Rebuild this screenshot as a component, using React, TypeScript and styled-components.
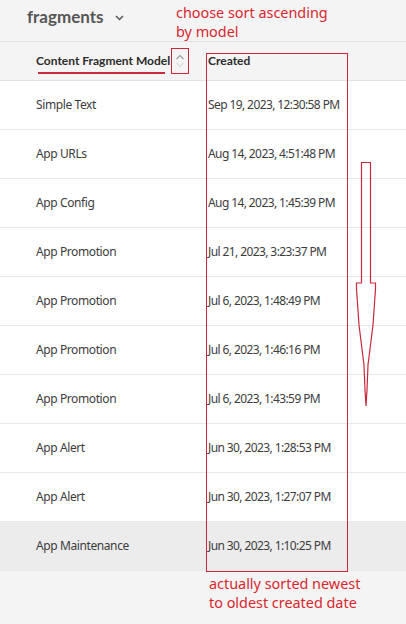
import React from "react";
import styled, { createGlobalStyle } from "styled-components";

const Global = createGlobalStyle`
  html, body { margin: 0; padding: 0; background: #f4f4f4; }
  body { font-family: "Noto Sans", Lato, sans-serif; }
  * { box-sizing: border-box; }
`;

const Page = styled.div`
  position: relative;
  width: 406px;
  height: 624px;
  background: #f4f4f4;
  overflow: hidden;
`;

const TopBar = styled.div`
  height: 42px;
  display: flex;
  align-items: center;
  padding-left: 27px;
  gap: 11px;
  border-bottom: 1px solid #e3e3e3;
`;

const Title = styled.span`
  font-family: Lato, sans-serif;
  font-size: 17px;
  font-weight: 700;
  color: #565656;
  margin-top: -8px;
`;

const Chevron = styled.svg`
  width: 9px;
  height: 6px;
  margin-top: -6px;
`;

const HeaderRow = styled.div`
  height: 39px;
  display: grid;
  grid-template-columns: 172px 1fr;
  align-items: center;
  padding-left: 36px;
  border-bottom: 1px solid #e3e3e3;
`;

const HeadCell = styled.div`
  display: flex;
  align-items: center;
  font-family: Lato, sans-serif;
  font-size: 12px;
  font-weight: 700;
  color: #2c2c2c;
  margin-top: -1px;
  white-space: nowrap;
`;

const SortBox = styled.div`
  width: 18px;
  height: 26px;
  margin-left: 1px;
  display: flex;
  align-items: center;
  justify-content: center;
  border: 1px solid #c8283a;
`;

const Row = styled.div<{ $selected?: boolean }>`
  height: 49px;
  display: grid;
  grid-template-columns: 172px 1fr;
  align-items: center;
  padding-left: 36px;
  background: ${(p) => (p.$selected ? "#ececec" : "#ffffff")};
  border-bottom: 1px solid #e9e9e9;
`;

const Cell = styled.div<{ $tight?: boolean }>`
  font-size: 12px;
  letter-spacing: ${(p) => (p.$tight ? "-0.6px" : "-0.4px")};
  color: #3c3c3c;
  white-space: nowrap;
  margin-top: -1px;
`;

const Note = styled.div<{ $x: number; $y: number }>`
  position: absolute;
  left: ${(p) => p.$x}px;
  top: ${(p) => p.$y}px;
  color: #d9262e;
  font-size: 14.4px;
  line-height: 19px;
  font-family: "Noto Sans", "Open Sans", sans-serif;
`;

const Frame = styled.div<{ $x: number; $y: number; $w: number; $h: number }>`
  position: absolute;
  left: ${(p) => p.$x}px;
  top: ${(p) => p.$y}px;
  width: ${(p) => p.$w}px;
  height: ${(p) => p.$h}px;
  border: 1px solid #c8283a;
`;

const Underline = styled.div`
  position: absolute;
  left: 38px;
  top: 72px;
  width: 127px;
  height: 1.5px;
  background: #c8283a;
`;

const Arrow = styled.svg`
  position: absolute;
  left: 354px;
  top: 160px;
`;

const rows: [string, string][] = [
  ["Simple Text", "Sep 19, 2023, 12:30:58 PM"],
  ["App URLs", "Aug 14, 2023, 4:51:48 PM"],
  ["App Config", "Aug 14, 2023, 1:45:39 PM"],
  ["App Promotion", "Jul 21, 2023, 3:23:37 PM"],
  ["App Promotion", "Jul 6, 2023, 1:48:49 PM"],
  ["App Promotion", "Jul 6, 2023, 1:46:16 PM"],
  ["App Promotion", "Jul 6, 2023, 1:43:59 PM"],
  ["App Alert", "Jun 30, 2023, 1:28:53 PM"],
  ["App Alert", "Jun 30, 2023, 1:27:07 PM"],
  ["App Maintenance", "Jun 30, 2023, 1:10:25 PM"],
];

export default function App() {
  return (
    <Page>
      <Global />
      <TopBar>
        <Title>fragments</Title>
        <Chevron viewBox="0 0 9 6">
          <path d="M1 1 L4.5 4.5 L8 1" fill="none" stroke="#555" strokeWidth="1.5" />
        </Chevron>
      </TopBar>
      <HeaderRow>
        <HeadCell>
          Content Fragment Model
          <SortBox>
            <svg width="10" height="16" viewBox="0 0 10 16">
              <path d="M1.5 6 L5 2.5 L8.5 6" fill="none" stroke="#9a9a9a" strokeWidth="1.1" />
              <path d="M1.5 10 L5 13.5 L8.5 10" fill="none" stroke="#dcdcdc" strokeWidth="1.1" />
            </svg>
          </SortBox>
        </HeadCell>
        <HeadCell>Created</HeadCell>
      </HeaderRow>
      {rows.map(([m, d], i) => (
        <Row key={i} $selected={i === rows.length - 1}>
          <Cell>{m}</Cell>
          <Cell $tight>{d}</Cell>
        </Row>
      ))}

      <Note $x={176} $y={3}>choose sort ascending<br />by model</Note>
      <Note $x={209} $y={574}>actually sorted newest<br />to oldest created date</Note>
      <Underline />
      <Frame $x={206} $y={53} $w={142} $h={519} />
      <Arrow width="26" height="250" viewBox="0 0 26 250">
        <path
          d="M7.5 2.5 L16.5 2.5 L16.5 123 L21.5 123 L21.5 129 L19 165 L14 205 L13 230 L12 246 L11 230 L10 205 L5 165 L2.5 129 L2.5 123 L7.5 123 Z"
          fill="none"
          stroke="#c8283a"
          strokeWidth="1.2"
        />
      </Arrow>
    </Page>
  );
}
